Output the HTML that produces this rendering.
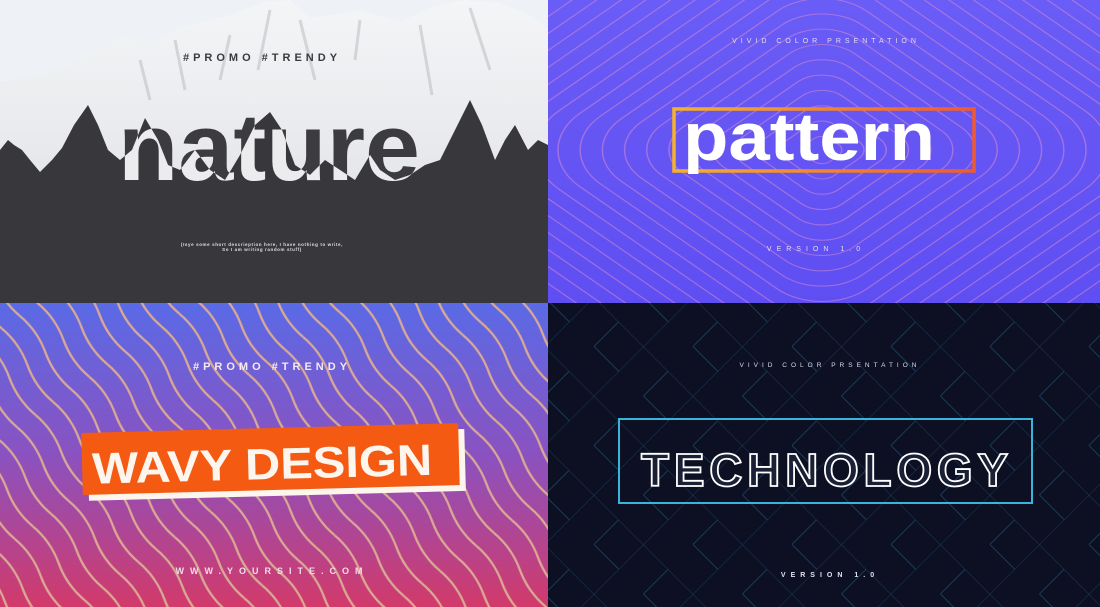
<!DOCTYPE html>
<html><head><meta charset="utf-8"><style>
html,body{margin:0;padding:0;background:#fff;overflow:hidden;width:1100px;height:607px;}
svg{display:block;}
text{font-family:"Liberation Sans",sans-serif;}
</style></head><body>
<svg width="1100" height="607" viewBox="0 0 1100 607" xmlns="http://www.w3.org/2000/svg">
<defs>
<linearGradient id="purp" x1="0" y1="0" x2="0" y2="1"><stop offset="0" stop-color="#6a5cf6"/><stop offset="1" stop-color="#5f4ef2"/></linearGradient>
<linearGradient id="wav" x1="0" y1="0" x2="0" y2="1"><stop offset="0" stop-color="#5a6ae6"/><stop offset="0.5" stop-color="#8a52c0"/><stop offset="1" stop-color="#d23a6a"/></linearGradient>
<linearGradient id="box" x1="0" y1="0" x2="1" y2="0"><stop offset="0" stop-color="#f5b22a"/><stop offset="1" stop-color="#f05a2e"/></linearGradient>
<linearGradient id="mtn" x1="0" y1="0" x2="0" y2="1"><stop offset="0" stop-color="#f4f5f7"/><stop offset="1" stop-color="#dcdde1"/></linearGradient>
<pattern id="wp" width="90" height="22" patternUnits="userSpaceOnUse" patternTransform="rotate(55)">
<path d="M0 11 Q22.5 5 45 11 T90 11" fill="none" stroke="#d9a994" stroke-width="2.2"/>
</pattern>
<pattern id="tp" width="70" height="70" patternUnits="userSpaceOnUse" patternTransform="rotate(45)">
<path d="M0 0H70M0 0V70M35 35H70M35 0V35" fill="none" stroke="#2a6c94" stroke-width="1" opacity="0.6"/>
</pattern>
<path id="trees" d="M0 150 L8 140 L14 145 L22 150 L30 160 L40 172 L52 160 L62 148 L74 125 L88 105 L98 125 L108 150 L120 160 L132 150 L145 118 L158 140 L168 165 L180 170 L195 150 L210 170 L225 180 L240 155 L255 125 L270 112 L282 130 L295 165 L310 175 L325 160 L340 170 L355 180 L370 155 L380 170 L395 180 L410 175 L425 165 L440 160 L455 130 L470 100 L482 125 L495 160 L505 140 L515 125 L528 150 L538 140 L548 145 L548 303 L0 303Z"/>
<mask id="sky"><rect x="0" y="0" width="548" height="303" fill="#fff"/><use href="#trees" fill="#000"/></mask>
<clipPath id="treeclip"><use href="#trees"/></clipPath>
<clipPath id="c1"><rect x="0" y="0" width="548" height="303"/></clipPath>
<clipPath id="c2"><rect x="548" y="0" width="552" height="303"/></clipPath>
<clipPath id="c3"><rect x="0" y="303" width="548" height="304"/></clipPath>
<clipPath id="c4"><rect x="548" y="303" width="552" height="304"/></clipPath>
</defs>

<!-- Q1 nature -->
<g clip-path="url(#c1)">
<rect x="0" y="0" width="548" height="303" fill="#eef2f7"/>
<path d="M0 82 L40 75 L80 60 L120 36 L150 45 L180 28 L230 15 L265 2 L290 0 L310 18 L340 14 L360 10 L400 22 L430 8 L462 0 L500 3 L530 15 L548 30 L548 303 L0 303Z" fill="url(#mtn)"/>
<g stroke="#b0b1b5" stroke-width="3" opacity="0.45" fill="none">
<path d="M175 40 L185 90 M270 10 L258 70 M300 20 L315 80 M420 25 L432 95 M470 8 L490 70 M230 35 L220 80 M140 60 L150 100 M360 20 L355 60"/>
</g>
<use href="#trees" fill="#38383c"/>
<text x="262" y="61" text-anchor="middle" font-size="11" font-weight="bold" letter-spacing="4" fill="#3a3a3e">#PROMO #TRENDY</text>
<g font-size="96" font-weight="bold">
<text x="118" y="180" textLength="302" lengthAdjust="spacingAndGlyphs" fill="#3c3c40" mask="url(#sky)">nature</text>
<text x="118" y="180" textLength="302" lengthAdjust="spacingAndGlyphs" fill="#ececee" clip-path="url(#treeclip)">nature</text>
</g>
<text x="262" y="246" text-anchor="middle" font-size="4.5" font-weight="bold" letter-spacing="0.6" fill="#e0e0e0">(Isye some short descrieption here, I have nothing to write,</text>
<text x="262" y="251" text-anchor="middle" font-size="4.5" font-weight="bold" letter-spacing="0.6" fill="#e0e0e0">So I am writing random stuff)</text>
</g>

<!-- Q2 pattern -->
<g clip-path="url(#c2)">
<rect x="548" y="0" width="552" height="303" fill="url(#purp)"/>
<g fill="none" stroke="#d88ad0" stroke-width="1" opacity="0.55" transform="translate(822 150) scale(1.45 1) rotate(45)">
<rect x="-12" y="-12" width="24" height="24" rx="8"/>
<rect x="-24" y="-24" width="48" height="48" rx="12"/>
<rect x="-36" y="-36" width="72" height="72" rx="16"/>
<rect x="-48" y="-48" width="96" height="96" rx="20"/>
<rect x="-60" y="-60" width="120" height="120" rx="24"/>
<rect x="-72" y="-72" width="144" height="144" rx="28"/>
<rect x="-84" y="-84" width="168" height="168" rx="32"/>
<rect x="-96" y="-96" width="192" height="192" rx="36"/>
<rect x="-108" y="-108" width="216" height="216" rx="40"/>
<rect x="-120" y="-120" width="240" height="240" rx="44"/>
<rect x="-132" y="-132" width="264" height="264" rx="48"/>
<rect x="-144" y="-144" width="288" height="288" rx="52"/>
<rect x="-156" y="-156" width="312" height="312" rx="56"/>
<rect x="-168" y="-168" width="336" height="336" rx="60"/>
<rect x="-180" y="-180" width="360" height="360" rx="64"/>
<rect x="-192" y="-192" width="384" height="384" rx="68"/>
<rect x="-204" y="-204" width="408" height="408" rx="72"/>
<rect x="-216" y="-216" width="432" height="432" rx="76"/>
<rect x="-228" y="-228" width="456" height="456" rx="80"/>
</g>
<text x="826" y="43" text-anchor="middle" font-size="7" letter-spacing="4" fill="#e8d8f5">VIVID COLOR PRSENTATION</text>
<rect x="674" y="109" width="300" height="62" fill="none" stroke="url(#box)" stroke-width="3.5"/>
<text x="683" y="160" font-size="68" font-weight="bold" textLength="252" lengthAdjust="spacingAndGlyphs" fill="#ffffff">pattern</text>
<text x="816" y="251" text-anchor="middle" font-size="7" letter-spacing="5" fill="#e8d8f5">VERSION 1.0</text>
</g>

<!-- Q3 wavy -->
<g clip-path="url(#c3)">
<rect x="0" y="303" width="548" height="304" fill="url(#wav)"/>
<rect x="-300" y="0" width="1200" height="1000" fill="url(#wp)"/>
<text x="272" y="370" text-anchor="middle" font-size="11" font-weight="bold" letter-spacing="4" fill="#f4eaf2">#PROMO #TRENDY</text>
<g transform="rotate(-1.5 272 460)">
<rect x="88" y="434" width="377" height="62" fill="#fdf6ee"/>
<rect x="82" y="428" width="377" height="62" fill="#f55a12"/>
<text x="92" y="479" font-size="44" font-weight="bold" textLength="340" lengthAdjust="spacingAndGlyphs" fill="#fdf6ee">WAVY DESIGN</text>
</g>
<text x="272" y="574" text-anchor="middle" font-size="9" font-weight="bold" letter-spacing="6" fill="#f2dde8">WWW.YOURSITE.COM</text>
</g>

<!-- Q4 technology -->
<g clip-path="url(#c4)">
<rect x="548" y="303" width="552" height="304" fill="#0c1022"/>
<rect x="400" y="200" width="900" height="500" fill="url(#tp)" opacity="0.8"/>
<text x="830" y="367" text-anchor="middle" font-size="6.5" letter-spacing="4" fill="#d8dcea">VIVID COLOR PRSENTATION</text>
<rect x="619" y="419" width="413" height="84" fill="none" stroke="#3ab4dc" stroke-width="2"/>
<text x="641" y="486" font-size="46" font-weight="bold" textLength="367" lengthAdjust="spacing" fill="#1a2035" stroke="#ffffff" stroke-width="1.8">TECHNOLOGY</text>
<text x="830" y="577" text-anchor="middle" font-size="7" font-weight="bold" letter-spacing="5" fill="#e0e4f0">VERSION 1.0</text>
</g>
</svg>
</body></html>
